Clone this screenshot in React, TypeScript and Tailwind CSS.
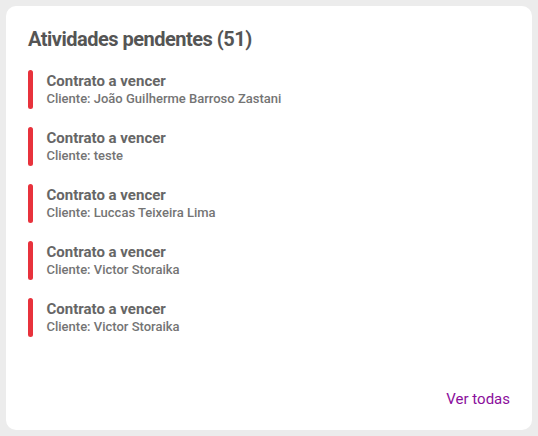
import React from "react";

const items = [
  "João Guilherme Barroso Zastani",
  "teste",
  "Luccas Teixeira Lima",
  "Victor Storaika",
  "Victor Storaika",
];

export default function App() {
  return (
    <div className="w-[538px] h-[436px] bg-[#ececec] p-[6px]" style={{ fontFamily: "Roboto, sans-serif" }}>
      <div className="w-[526px] h-[424px] bg-white rounded-[10px] flex flex-col px-[22px] pt-[21px] pb-[22px]">
        <h2 className="text-[20px] leading-[24px] font-bold tracking-[-0.5px] text-[#555555]">Atividades pendentes (51)</h2>
        <div className="flex flex-col gap-[18px] mt-[19px]">
          {items.map((c, i) => (
            <div key={i} className="flex items-stretch gap-[14px] h-[39px]">
              <div className="w-[4.5px] rounded-full bg-[#e8323c]" />
              <div className="flex flex-col pt-[2px]">
                <span className="text-[15px] leading-[18px] font-bold text-[#666666]">Contrato a vencer</span>
                <span className="text-[13px] leading-[16px] font-medium text-[#747474] mt-[1px]">Cliente: {c}</span>
              </div>
            </div>
          ))}
        </div>
        <div className="flex-1" />
        <div className="flex justify-end">
          <span className="text-[15px] leading-[18px] text-[#8b0f9c]">Ver todas</span>
        </div>
      </div>
    </div>
  );
}
